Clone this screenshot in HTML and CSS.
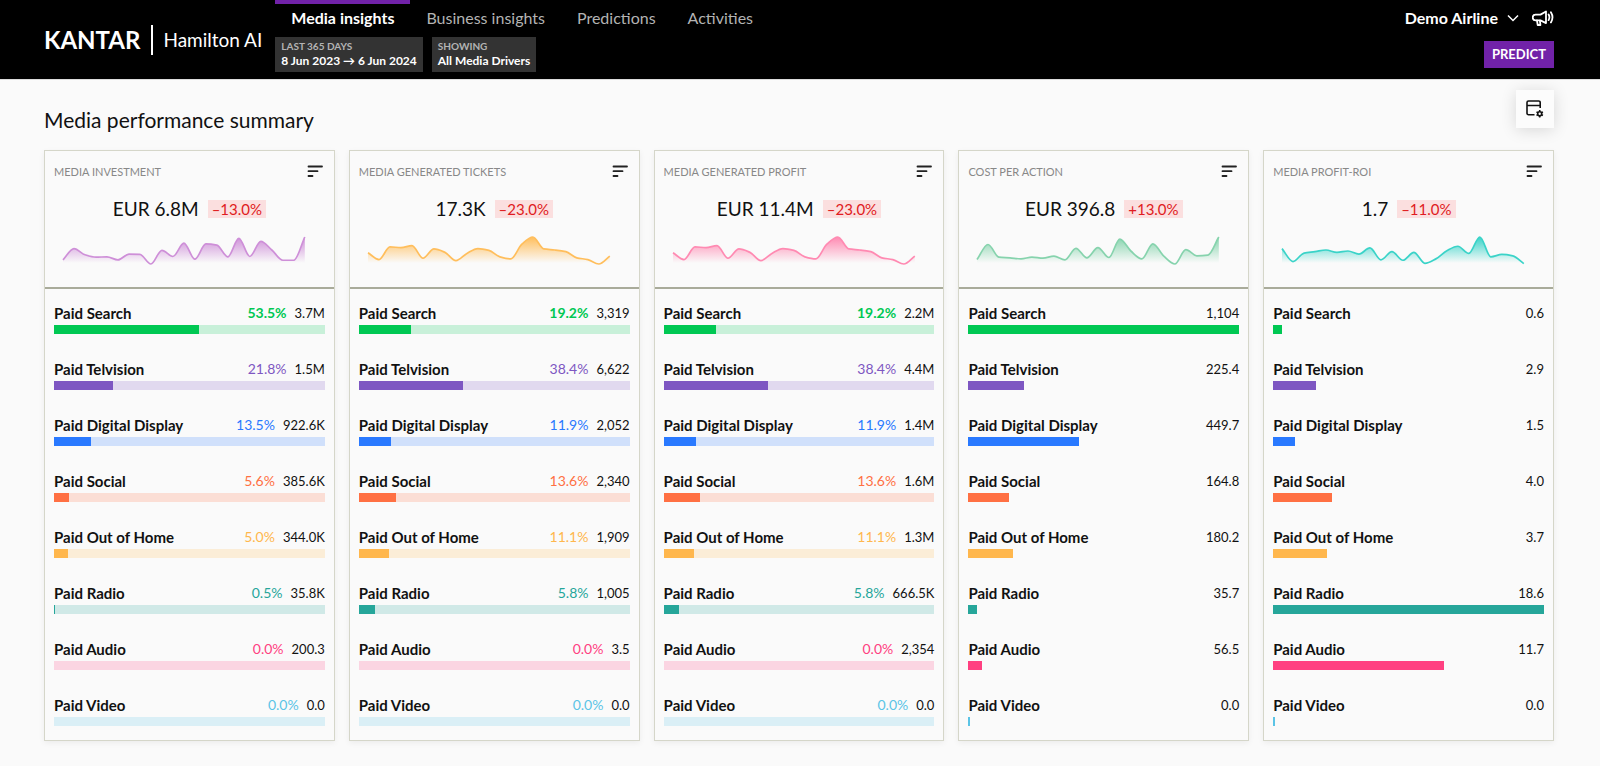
FILE: index.html
```
<!DOCTYPE html>
<html lang="en">
  <head>
    <meta charset="utf-8">
    <meta name="viewport" content="width=device-width, initial-scale=1.0">
    <title>Media insights - Hamilton AI</title>
    <link rel="stylesheet" href="styles.css">
  </head>
  <body>
    <header class="header">
      <a class="brand" href="#">
        <span class="brand-logo">KANTAR</span>
        <span class="brand-product">Hamilton AI</span>
      </a>

      <div class="header-center">
        <nav class="tabs">
          <a class="tab selected" href="#">Media insights</a>
          <a class="tab" href="#">Business insights</a>
          <a class="tab" href="#">Predictions</a>
          <a class="tab" href="#">Activities</a>
        </nav>
        <div class="filters">
          <button class="filter">
            <span class="filter-label">LAST 365 DAYS</span>
            <span class="filter-value">8 Jun 2023 → 6 Jun 2024</span>
          </button>
          <button class="filter">
            <span class="filter-label">SHOWING</span>
            <span class="filter-value">All Media Drivers</span>
          </button>
        </div>
      </div>

      <div class="header-right">
        <div class="account">
          <button class="account-name">
            Demo Airline
            <svg width="12" height="8" viewBox="0 0 12 8" fill="none" stroke="currentColor" stroke-width="1.5"><path d="M1 1.5l5 5 5-5"/></svg>
          </button>
          <button class="icon-button" aria-label="Announcements">
            <svg width="22" height="16" viewBox="0 0 22 16" fill="none" stroke="currentColor" stroke-width="1.8" stroke-linejoin="round" stroke-linecap="round">
              <path d="M14 1.500v11.600L8.500 10.400H3.600a2.900 2.900 0 0 1 0-5.800h4.900z"/>
              <path d="M5 10.500l.7 4.500h2.700l-.5-4.300"/>
              <path d="M16.600 4.500q1.600 2.800 0 5.600M18.900 2.200q3.200 5.100 0 10.200"/>
            </svg>
          </button>
        </div>
        <button class="predict">PREDICT</button>
      </div>
    </header>

    <main class="main">
      <div class="title-row">
        <h1>Media performance summary</h1>
        <button class="settings" aria-label="Configure view">
          <svg width="18" height="18" viewBox="0 0 18 18" fill="none" stroke="currentColor" stroke-width="1.6">
            <path d="M8.500 14.700H2.500a1.500 1.500 0 0 1-1.500-1.500V2.500A1.500 1.500 0 0 1 2.500 1h10.200a1.500 1.500 0 0 1 1.500 1.500V8M1 5.500h13.200"/>
            <circle cx="13.700" cy="13.700" r="2"/>
            <path d="M13.700 10v1.700M13.700 15.700v1.700M10.500 11.900l1.500.9M15.400 14.600l1.500.9M10.500 15.500l1.500-.9M15.400 12.800l1.500-.9"/>
          </svg>
        </button>
      </div>
      <div class="cards" id="cards"></div>
    </main>

    <script src="cards.js"></script>
  </body>
</html>
```
FILE: styles.css
```
* {
  box-sizing: border-box;
}
body {
  margin: 0;
  background: #fafafa;
  color: #111;
  font-family: Lato, "Liberation Sans", sans-serif;
  font-size: 14px;
}
h1, h2, p, ul {
  margin: 0;
  padding: 0;
}
button {
  margin: 0;
  padding: 0;
  border: none;
  background: none;
  color: inherit;
  font: inherit;
  cursor: pointer;
}
a {
  color: inherit;
  text-decoration: none;
}
svg {
  display: block;
}

/* header */
.header {
  display: flex;
  min-height: 80px;
  padding: 0 46px 0 44px;
  background: #000;
  border-bottom: 1px solid #dcdcdc;
  color: #fff;
}
.brand {
  display: flex;
  align-items: center;
  margin-right: 13px;
}
.brand-logo {
  padding-right: 11px;
  border-right: 2px solid #fff;
  font-size: 24px;
  font-weight: 700;
  line-height: 30px;
}
.brand-product {
  padding-left: 10px;
  font-size: 19px;
}
.header-center {
  flex: 1;
}
.tabs {
  display: flex;
}
.tab {
  padding: 3px 16px 8px;
  border-top: 4px solid transparent;
  color: #b3b3b3;
  font-size: 16px;
  line-height: 22px;
}
.tab.selected {
  border-color: #7122a8;
  color: #fff;
  font-weight: 700;
}
.filters {
  display: flex;
  gap: 9px;
}
.filter {
  display: flex;
  flex-direction: column;
  padding: 3px 6px;
  background: #333;
  text-align: left;
}
.filter-label {
  color: #b3b3b3;
  font-size: 10px;
  font-weight: 700;
  line-height: 13px;
}
.filter-value {
  font-size: 12px;
  font-weight: 700;
  line-height: 16px;
}
.header-right {
  display: flex;
  flex-direction: column;
  align-items: flex-end;
  gap: 12px;
  padding-top: 7px;
}
.account {
  display: flex;
  align-items: center;
  gap: 13px;
}
.account-name {
  display: flex;
  align-items: center;
  gap: 9px;
  font-size: 16px;
  font-weight: 700;
  line-height: 22px;
}
.predict {
  padding: 0 8px;
  background: #7122a8;
  font-size: 13px;
  font-weight: 700;
  line-height: 27px;
}

/* summary */
.main {
  padding: 10px 46px 24px 44px;
}
.title-row {
  display: flex;
  justify-content: space-between;
  align-items: flex-start;
  height: 60px;
}
h1 {
  padding-top: 17px;
  font-size: 21px;
  font-weight: 400;
  line-height: 26px;
}
.settings {
  display: flex;
  align-items: center;
  justify-content: center;
  width: 38px;
  height: 38px;
  background: #fcfcfc;
  box-shadow: 0 2px 16px rgba(0, 0, 0, 0.14);
}
.cards {
  display: grid;
  grid-template-columns: repeat(5, 1fr);
  gap: 14px;
}
.card {
  border: 1px solid #d5d6c9;
  box-shadow: 0 2px 6px rgba(0, 0, 0, 0.06);
}
.card-top {
  padding: 8px 9px 23px;
  border-bottom: 2px solid #a9ab9a;
}
.card-head {
  display: flex;
  justify-content: space-between;
  align-items: center;
  height: 24px;
}
.card-head h2 {
  color: #888;
  font-size: 11px;
  font-weight: 400;
}
.total {
  display: flex;
  justify-content: center;
  align-items: center;
  gap: 9px;
  padding: 17px 0 19px;
  font-size: 19px;
  line-height: 18px;
}
.change {
  padding: 0 4px;
  background: #fbdfdf;
  color: #e01b22;
  font-size: 15px;
  line-height: 18px;
}
.sparkline {
  width: 100%;
  height: 27px;
  padding: 0 20px 0 9px;
  overflow: visible;
}
.channels {
  padding: 14px 9px;
  list-style: none;
}
.channel + .channel {
  margin-top: 25px;
}
.channel-text {
  display: flex;
  gap: 8px;
  margin-bottom: 2px;
  line-height: 20px;
}
.channel-name {
  flex: 1;
  font-size: 15px;
  font-weight: 700;
}
.channel:first-child .channel-share {
  font-weight: 700;
}
.channel-value {
  font-size: 13px;
}
.bar {
  height: 9px;
}
.fill {
  height: 9px;
}
```
FILE: cards.js
```
const channels = [
  { name: 'Paid Search', color: '#00c853' },
  { name: 'Paid Telvision', color: '#7e57c2' },
  { name: 'Paid Digital Display', color: '#2979ff' },
  { name: 'Paid Social', color: '#ff7043' },
  { name: 'Paid Out of Home', color: '#ffb74d' },
  { name: 'Paid Radio', color: '#26a69a' },
  { name: 'Paid Audio', color: '#ff4081' },
  { name: 'Paid Video', color: '#5bc4e6' }
];

const cards = [
  {
    title: 'MEDIA INVESTMENT', total: 'EUR 6.8M', change: '–13.0%', color: '#ce8fd8', share: true,
    trend: [67, 34, 52, 59, 58, 67, 50, 51, 79, 39, 57, 18, 65, 20, 24, 58, 4, 57, 13, 38, 68, 68, 0],
    values: ['3.7M', '1.5M', '922.6K', '385.6K', '344.0K', '35.8K', '200.3', '0.0'],
    widths: [53.5, 21.8, 13.5, 5.6, 5.0, 0.5, 0, 0]
  },
  {
    title: 'MEDIA GENERATED TICKETS', total: '17.3K', change: '–23.0%', color: '#ffbe5c', share: true,
    trend: [46, 66, 29, 31, 25, 62, 35, 45, 69, 48, 34, 39, 58, 64, 21, 0, 35, 38, 43, 61, 66, 79, 56],
    values: ['3,319', '6,622', '2,052', '2,340', '1,909', '1,005', '3.5', '0.0'],
    widths: [19.2, 38.4, 11.9, 13.6, 11.1, 5.8, 0, 0]
  },
  {
    title: 'MEDIA GENERATED PROFIT', total: 'EUR 11.4M', change: '–23.0%', color: '#ff8ab2', share: true,
    trend: [46, 66, 29, 31, 25, 62, 35, 45, 69, 48, 34, 39, 58, 64, 21, 0, 35, 38, 43, 61, 66, 79, 56],
    values: ['2.2M', '4.4M', '1.4M', '1.6M', '1.3M', '666.5K', '2,354', '0.0'],
    widths: [19.2, 38.4, 11.9, 13.6, 11.1, 5.8, 0, 0]
  },
  {
    title: 'COST PER ACTION', total: 'EUR 396.8', change: '+13.0%', color: '#86d3ad', share: false,
    trend: [66, 22, 59, 61, 64, 59, 62, 56, 67, 33, 61, 31, 60, 6, 41, 64, 20, 56, 79, 37, 55, 53, 0],
    values: ['1,104', '225.4', '449.7', '164.8', '180.2', '35.7', '56.5', '0.0'],
    widths: [100, 20.4, 40.7, 14.9, 16.3, 3.2, 5.1, 0.7]
  },
  {
    title: 'MEDIA PROFIT-ROI', total: '1.7', change: '–11.0%', color: '#3ad3c8', share: false,
    trend: [34, 72, 47, 43, 38, 45, 41, 50, 32, 67, 43, 68, 45, 77, 64, 40, 27, 48, 0, 58, 51, 55, 78],
    values: ['0.6', '2.9', '1.5', '4.0', '3.7', '18.6', '11.7', '0.0'],
    widths: [3.4, 15.8, 8, 21.6, 19.9, 100, 63.1, 0.7]
  }
];

const step = 10;

// monotone curve through the points, flat at every peak and dip
const curve = points => {
  const last = points.length - 1;
  const slope = i => {
    if (i === 0) return points[1] - points[0];
    if (i === last) return points[last] - points[last - 1];
    const before = points[i] - points[i - 1];
    const after = points[i + 1] - points[i];
    return before * after <= 0 ? 0 : 2 * before * after / (before + after);
  };
  let d = `M0 ${points[0]}`;
  for (let i = 1; i <= last; i++) {
    const x = i * step;
    d += `C${x - step * 2 / 3} ${points[i - 1] + slope(i - 1) / 3} ${x - step / 3} ${points[i] - slope(i) / 3} ${x} ${points[i]}`;
  }
  return d;
};

const sparkline = (card, index) => {
  const width = (card.trend.length - 1) * step;
  const d = curve(card.trend);
  return `
    <svg class="sparkline" viewBox="0 0 ${width} 79" preserveAspectRatio="none">
      <linearGradient id="fade${index}" gradientUnits="userSpaceOnUse" x1="0" y1="0" x2="0" y2="76">
        <stop offset="0" stop-color="${card.color}"/>
        <stop offset="1" stop-color="${card.color}" stop-opacity="0"/>
      </linearGradient>
      <path d="${d}V79H0z" fill="url(#fade${index})"/>
      <path d="${d}" fill="none" stroke="${card.color}" stroke-width="1.7" vector-effect="non-scaling-stroke"/>
    </svg>`;
};

const channelRow = (card, channel, i) => `
  <li class="channel">
    <div class="channel-text">
      <span class="channel-name">${channel.name}</span>
      ${card.share ? `<span class="channel-share" style="color: ${channel.color}">${card.widths[i].toFixed(1)}%</span>` : ''}
      <span class="channel-value">${card.values[i]}</span>
    </div>
    <div class="bar" style="background: ${card.share ? channel.color + '33' : 'none'}">
      <div class="fill" style="width: ${card.widths[i]}%; background: ${channel.color}"></div>
    </div>
  </li>`;

document.getElementById('cards').innerHTML = cards.map((card, index) => `
  <section class="card">
    <div class="card-top">
      <div class="card-head">
        <h2>${card.title}</h2>
        <button aria-label="Sort">
          <svg width="18" height="14" viewBox="0 0 18 14" stroke="#222" stroke-width="1.8" stroke-linecap="round"><path d="M1.500 2.500h13.500M1.500 7.200h9M1.500 12h4"/></svg>
        </button>
      </div>
      <p class="total">${card.total} <span class="change">${card.change}</span></p>
      ${sparkline(card, index)}
    </div>
    <ul class="channels">
      ${channels.map((channel, i) => channelRow(card, channel, i)).join('')}
    </ul>
  </section>`).join('');
```
